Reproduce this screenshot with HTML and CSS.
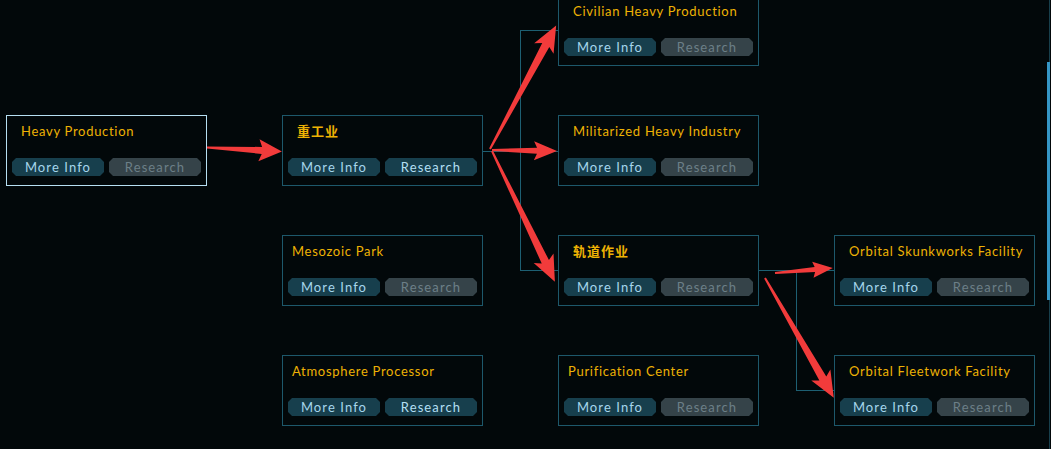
FILE: index.html
```html
<!DOCTYPE html>
<html lang="en">
<head>
<meta charset="utf-8">
<title>Tech Tree</title>
<link rel="stylesheet" href="styles.css">
</head>
<body>
<div class="screen">
  <div class="canvas">
    <svg class="links" width="1047" height="449" viewBox="0 0 1047 449">
      <g fill="none" stroke="#1d5f72" stroke-width="1">
        <path d="M482 151.5H558"/>
        <path d="M520.5 30.5V270.5"/>
        <path d="M520 30.5H558"/>
        <path d="M520 270.5H558"/>
        <path d="M758 270.5H834"/>
        <path d="M796.5 270V390.5"/>
        <path d="M796 390.5H834"/>
      </g>
    </svg>
    <div class="tree">
      <div class="card card-selected c0 r1">
        <div class="title">Heavy Production</div>
        <div class="actions"><span class="btn">More Info</span><span class="btn btn-off">Research</span></div>
      </div>
      <div class="card c1 r1">
        <div class="title cjk">重工业</div>
        <div class="actions"><span class="btn">More Info</span><span class="btn btn-on">Research</span></div>
      </div>
      <div class="card c1 r2">
        <div class="title title-near">Mesozoic Park</div>
        <div class="actions"><span class="btn">More Info</span><span class="btn btn-off">Research</span></div>
      </div>
      <div class="card c1 r3">
        <div class="title title-near">Atmosphere Processor</div>
        <div class="actions"><span class="btn">More Info</span><span class="btn btn-on">Research</span></div>
      </div>
      <div class="card c2 r0">
        <div class="title">Civilian Heavy Production</div>
        <div class="actions"><span class="btn">More Info</span><span class="btn btn-off">Research</span></div>
      </div>
      <div class="card c2 r1">
        <div class="title">Militarized Heavy Industry</div>
        <div class="actions"><span class="btn">More Info</span><span class="btn btn-off">Research</span></div>
      </div>
      <div class="card c2 r2">
        <div class="title cjk">轨道作业</div>
        <div class="actions"><span class="btn">More Info</span><span class="btn btn-off">Research</span></div>
      </div>
      <div class="card c2 r3">
        <div class="title title-near">Purification Center</div>
        <div class="actions"><span class="btn">More Info</span><span class="btn btn-off">Research</span></div>
      </div>
      <div class="card c3 r2">
        <div class="title">Orbital Skunkworks Facility</div>
        <div class="actions"><span class="btn">More Info</span><span class="btn btn-off">Research</span></div>
      </div>
      <div class="card c3 r3">
        <div class="title">Orbital Fleetwork Facility</div>
        <div class="actions"><span class="btn">More Info</span><span class="btn btn-off">Research</span></div>
      </div>
    </div>
    <svg class="marks" width="1047" height="449" viewBox="0 0 1047 449">
      <g fill="#f23b3b">
        <path transform="translate(207 147.5) rotate(3.05)" d="M0,-1 L55,-3.5 L52,-11 L75,0 L52,11 L55,3.5 L0,1Z"/>
        <path transform="translate(490 149) rotate(-61.8)" d="M0,-1 L118,-4 L114,-11 L140,0 L114,11 L118,4 L0,1Z"/>
        <path transform="translate(492 150) rotate(0.9)" d="M0,-1 L45,-3 L42,-9.5 L65,0 L42,9.5 L45,3 L0,1Z"/>
        <path transform="translate(492 151) rotate(64.3)" d="M0,-1 L123,-4 L119,-11 L145,0 L119,11 L123,4 L0,1Z"/>
        <path transform="translate(775 273) rotate(-4.9)" d="M0,-1 L40,-2.5 L38,-8 L58,0 L38,8 L40,2.5 L0,1Z"/>
        <path transform="translate(765 278) rotate(60.1)" d="M0,-1 L116,-4 L112,-11 L138,0 L112,11 L116,4 L0,1Z"/>
      </g>
    </svg>
  </div>
  <div class="scroll"><div class="thumb"></div></div>
</div>
</body>
</html>
```
FILE: styles.css
```css
html, body {
  margin: 0;
  padding: 0;
  background: #02080a;
  overflow: hidden;
}

.screen {
  display: flex;
  width: 1051px;
  height: 449px;
}

.canvas {
  flex: 1;
  position: relative;
  overflow: hidden;
}

.links, .marks {
  position: absolute;
  left: 0;
  top: 0;
  pointer-events: none;
}

.links { z-index: 0; }
.marks { z-index: 2; }

.tree {
  position: relative;
  z-index: 1;
  display: grid;
  grid-template-columns: repeat(4, 201px);
  grid-template-rows: repeat(4, 71px);
  column-gap: 75px;
  row-gap: 49px;
  padding-left: 6px;
  margin-top: -5px;
}

.c0 { grid-column: 1; }
.c1 { grid-column: 2; }
.c2 { grid-column: 3; }
.c3 { grid-column: 4; }
.r0 { grid-row: 1; }
.r1 { grid-row: 2; }
.r2 { grid-row: 3; }
.r3 { grid-row: 4; }

.card {
  box-sizing: border-box;
  border: 1px solid #1d586b;
  background: #02080a;
  padding: 7px 5px 9px;
  display: flex;
  flex-direction: column;
}

.card-selected {
  border-color: #b6dff2;
}

.title {
  margin-left: 9px;
  font-family: Lato, "Open Sans", sans-serif;
  font-size: 13px;
  line-height: 16px;
  letter-spacing: 0.7px;
  color: #eeb204;
  white-space: nowrap;
}

.title-near {
  margin-left: 4px;
}

.title.cjk {
  font-family: "Noto Sans CJK SC", sans-serif;
  font-weight: 700;
  font-size: 13px;
  letter-spacing: 1px;
}

.actions {
  margin-top: auto;
  display: flex;
  gap: 5px;
}

.btn {
  flex: 1;
  height: 18px;
  line-height: 18px;
  text-align: center;
  font-family: Lato, "Open Sans", sans-serif;
  font-size: 13px;
  letter-spacing: 1.1px;
  background: #173f4d;
  color: #a6d6ec;
  clip-path: polygon(4px 0, calc(100% - 4px) 0, 100% 4px, 100% calc(100% - 4px), calc(100% - 4px) 100%, 4px 100%, 0 calc(100% - 4px), 0 4px);
}

.btn-on {
  color: #b3dff3;
}

.btn-off {
  background: #354349;
  color: #6c7f87;
}

.scroll {
  width: 4px;
  height: 449px;
  background: linear-gradient(to right, transparent 2px, #173f4c 2px, #173f4c 3px, transparent 3px);
}

.thumb {
  margin-top: 62px;
  width: 3px;
  height: 238px;
  background: #3596c6;
}
```
